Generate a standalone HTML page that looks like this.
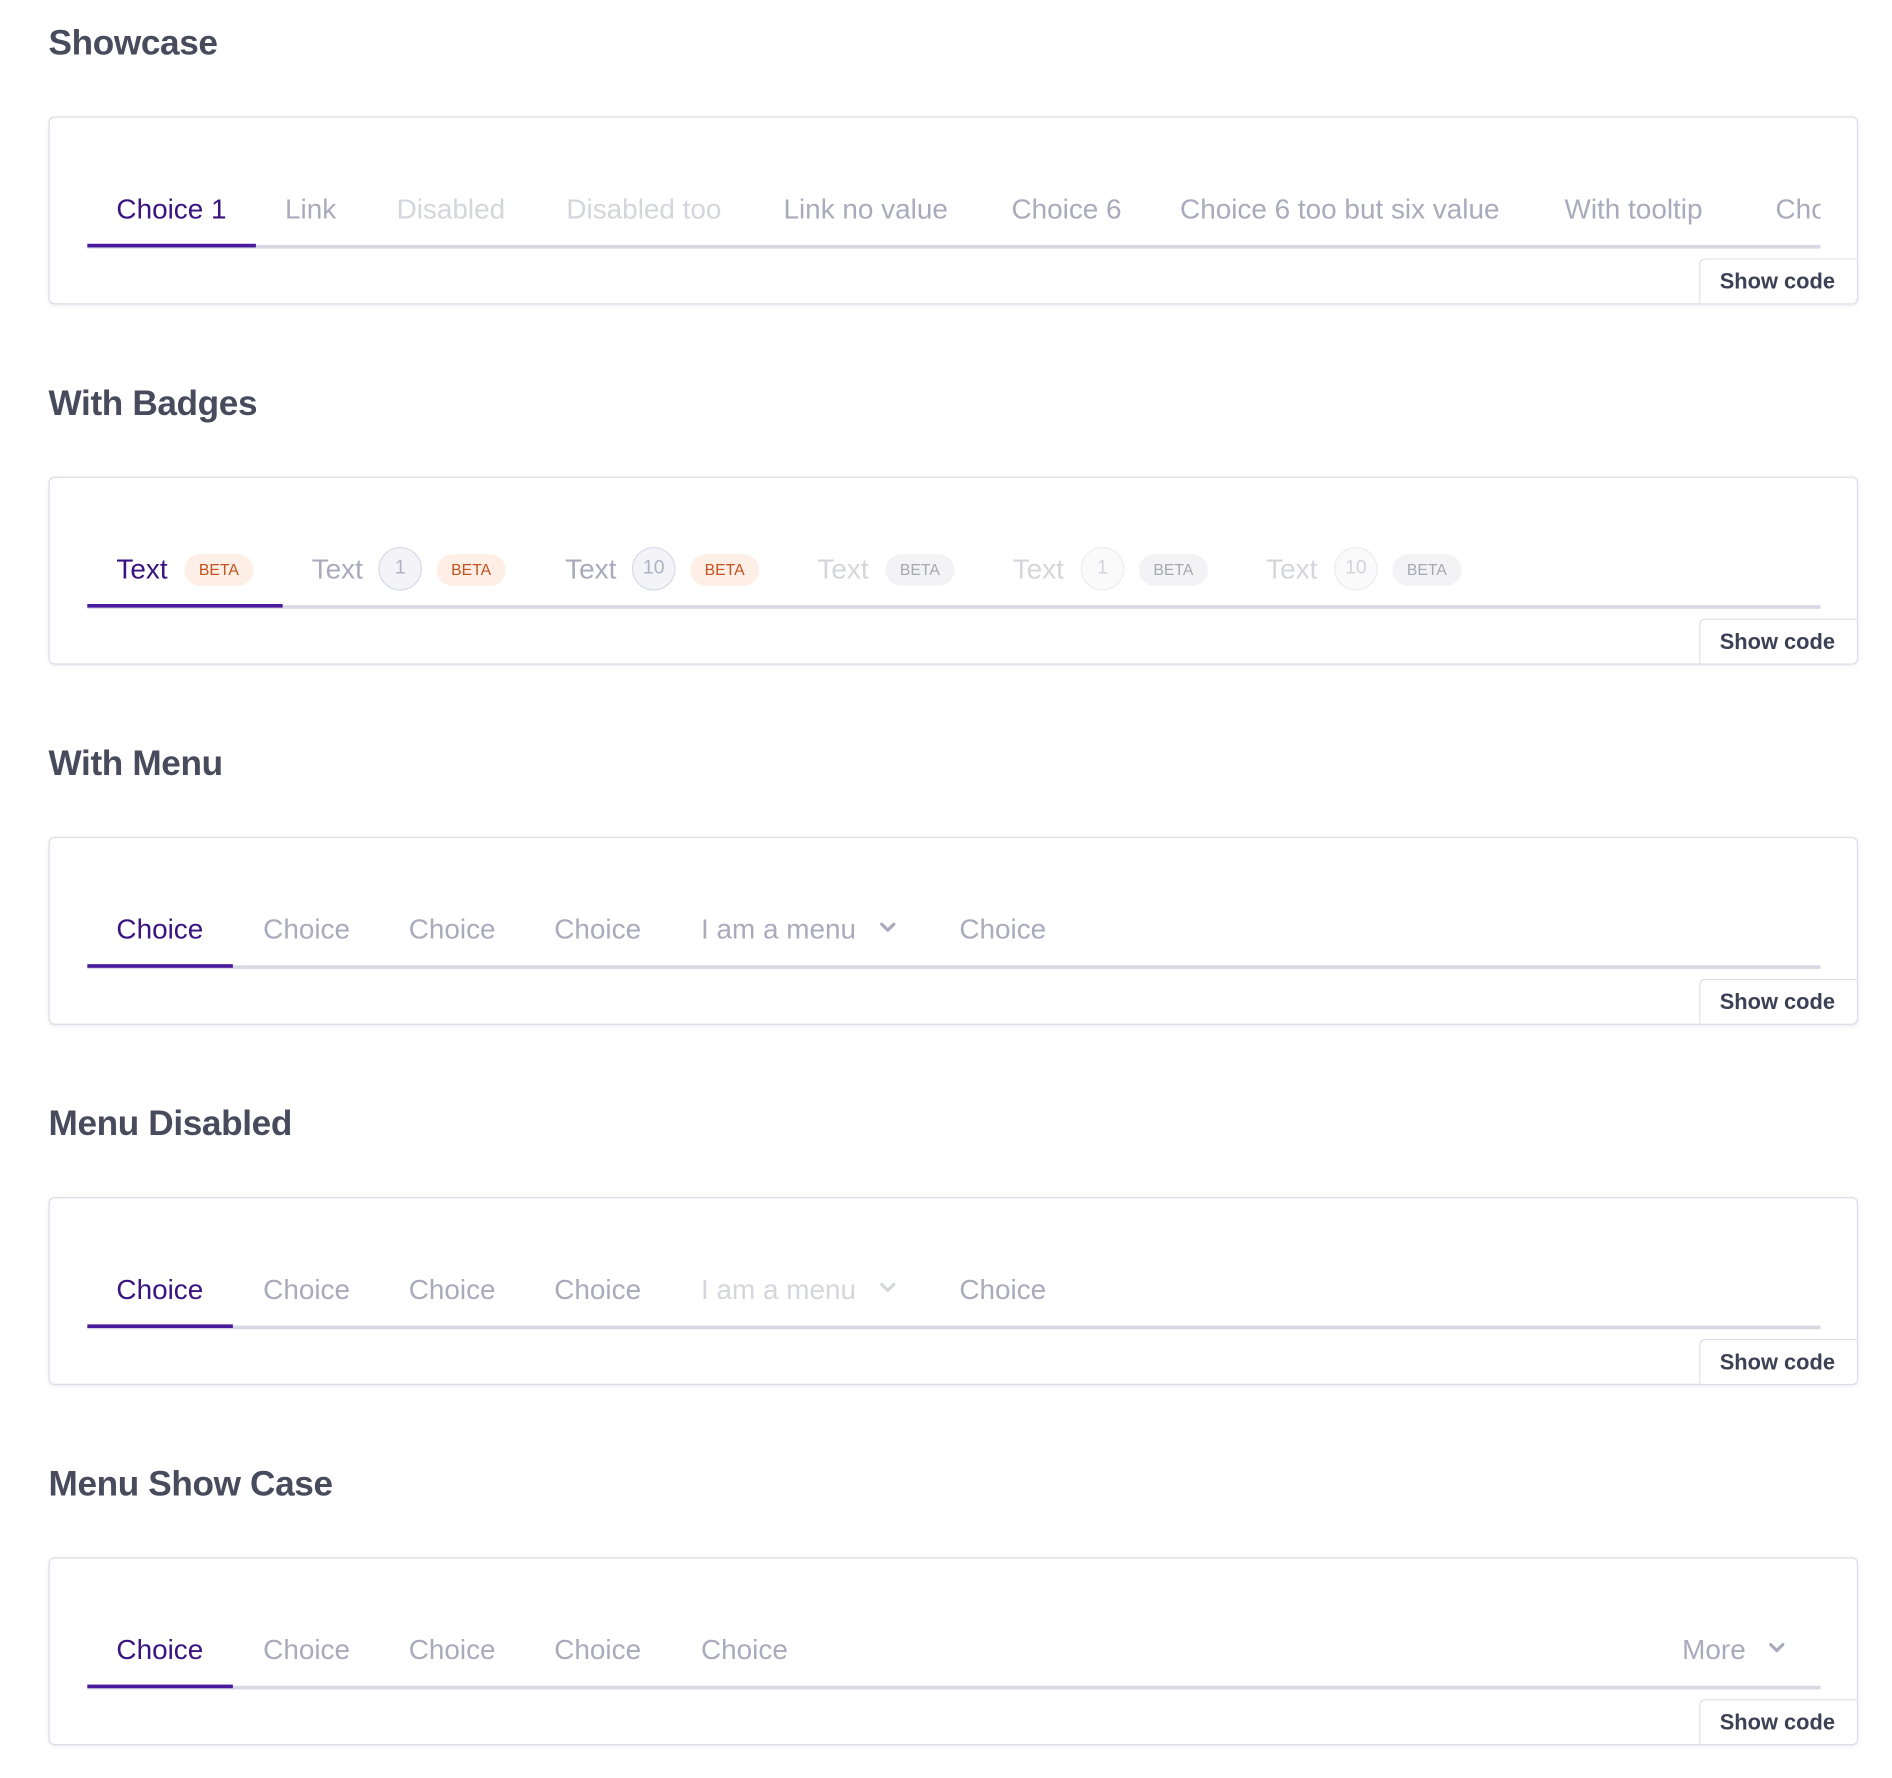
<!DOCTYPE html>
<html><head><meta charset="utf-8"><style>
html,body{margin:0;padding:0;background:#fff;width:1892px;height:1778px;overflow:hidden}
#w{position:absolute;left:0;top:0;width:1560px;height:1466px;transform:scale(1.2128);transform-origin:0 0;font-family:"Liberation Sans",sans-serif}
h2{position:absolute;left:40px;margin:0;font-size:29px;font-weight:bold;color:#474b5c;line-height:36px;letter-spacing:-0.3px}
.card{position:absolute;left:40px;width:1490px;height:153px;border:1px solid #dcdde8;border-radius:5px;box-shadow:0 1px 3px rgba(40,40,80,0.08);background:#fff;overflow:hidden}
.track{position:absolute;left:31px;width:1429px;top:105px;height:3px;background:#d6d8e4}
.act{position:absolute;top:104px;height:3px;background:#4a1a9c;left:31px}
.t{position:absolute;top:60px;line-height:30px;font-size:23px;color:#a9abbd;white-space:nowrap}
.t.a{color:#3b137f}
.t.d{color:#d5d6dc}
.clip{position:absolute;left:0;top:0;width:1460px;height:110px;overflow:hidden}
.sc{position:absolute;left:1360px;top:116px;width:132px;height:40px;border-top:1px solid #dcdde8;border-left:1px solid #dcdde8;border-top-left-radius:5px;font-weight:bold;font-size:18px;color:#3c4055;line-height:36px;text-indent:16px;background:#fff}
.b{position:absolute;top:63px;height:26px;line-height:26px;border-radius:13px;font-size:13px;text-align:center;background:#fdefe5;color:#c4521e}
.b.d{background:#f3f3f5;color:#a7a8b0}
.c{position:absolute;top:57px;width:34px;height:34px;border-radius:50%;border:1px solid #d7d9e5;background:#f4f4f8;color:#aeb0c0;font-size:16px;line-height:34px;text-align:center}
.c.d{border-color:#ececf0;background:#fafafb;color:#d3d4da}
svg.ch{position:absolute;top:68px}
</style></head><body><div id="w">

<h2 style="top:18px">Showcase</h2>
<div class="card" style="top:96px">
 <div class="clip">
  <span class="t a" style="left:55px">Choice 1</span>
  <span class="t" style="left:194px">Link</span>
  <span class="t d" style="left:286px">Disabled</span>
  <span class="t d" style="left:426px">Disabled too</span>
  <span class="t" style="left:605px">Link no value</span>
  <span class="t" style="left:793px">Choice 6</span>
  <span class="t" style="left:932px">Choice 6 too but six value</span>
  <span class="t" style="left:1249px">With tooltip</span>
  <span class="t" style="left:1423px">Choice 9</span>
 </div>
 <div class="track"></div><div class="act" style="width:139px"></div>
 <div class="sc">Show code</div>
</div>

<h2 style="top:315px">With Badges</h2>
<div class="card" style="top:393px">
  <span class="t a" style="left:55px">Text</span><span class="b" style="left:111px;width:57px">BETA</span>
  <span class="t" style="left:216px">Text</span><span class="c" style="left:271px">1</span><span class="b" style="left:319px;width:57px">BETA</span>
  <span class="t" style="left:425px">Text</span><span class="c" style="left:480px">10</span><span class="b" style="left:528px;width:57px">BETA</span>
  <span class="t d" style="left:633px">Text</span><span class="b d" style="left:689px;width:57px">BETA</span>
  <span class="t d" style="left:794px">Text</span><span class="c d" style="left:850px">1</span><span class="b d" style="left:898px;width:57px">BETA</span>
  <span class="t d" style="left:1003px">Text</span><span class="c d" style="left:1059px">10</span><span class="b d" style="left:1107px;width:57px">BETA</span>
 <div class="track"></div><div class="act" style="width:161px"></div>
 <div class="sc">Show code</div>
</div>

<h2 style="top:612px">With Menu</h2>
<div class="card" style="top:690px">
  <span class="t a" style="left:55px">Choice</span>
  <span class="t" style="left:176px">Choice</span>
  <span class="t" style="left:296px">Choice</span>
  <span class="t" style="left:416px">Choice</span>
  <span class="t" style="left:537px">I am a menu</span>
  <svg class="ch" style="left:683px" width="16" height="12" viewBox="0 0 16 12"><path d="M3 3l5 5 5-5" fill="none" stroke="#a9abbd" stroke-width="2.6" stroke-linecap="round" stroke-linejoin="round"/></svg>
  <span class="t" style="left:750px">Choice</span>
 <div class="track"></div><div class="act" style="width:120px"></div>
 <div class="sc">Show code</div>
</div>

<h2 style="top:909px">Menu Disabled</h2>
<div class="card" style="top:987px">
  <span class="t a" style="left:55px">Choice</span>
  <span class="t" style="left:176px">Choice</span>
  <span class="t" style="left:296px">Choice</span>
  <span class="t" style="left:416px">Choice</span>
  <span class="t d" style="left:537px">I am a menu</span>
  <svg class="ch" style="left:683px" width="16" height="12" viewBox="0 0 16 12"><path d="M3 3l5 5 5-5" fill="none" stroke="#d5d6dc" stroke-width="2.6" stroke-linecap="round" stroke-linejoin="round"/></svg>
  <span class="t" style="left:750px">Choice</span>
 <div class="track"></div><div class="act" style="width:120px"></div>
 <div class="sc">Show code</div>
</div>

<h2 style="top:1206px">Menu Show Case</h2>
<div class="card" style="top:1284px">
  <span class="t a" style="left:55px">Choice</span>
  <span class="t" style="left:176px">Choice</span>
  <span class="t" style="left:296px">Choice</span>
  <span class="t" style="left:416px">Choice</span>
  <span class="t" style="left:537px">Choice</span>
  <span class="t" style="left:1346px">More</span>
  <svg class="ch" style="left:1416px" width="16" height="12" viewBox="0 0 16 12"><path d="M3 3l5 5 5-5" fill="none" stroke="#a9abbd" stroke-width="2.6" stroke-linecap="round" stroke-linejoin="round"/></svg>
 <div class="track"></div><div class="act" style="width:120px"></div>
 <div class="sc">Show code</div>
</div>

</div></body></html>
